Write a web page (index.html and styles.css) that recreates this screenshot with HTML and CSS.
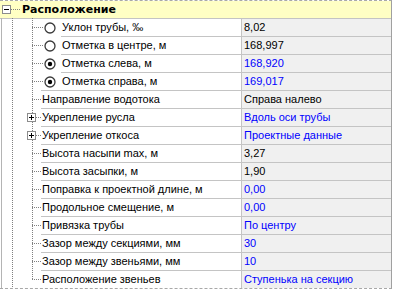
FILE: index.html
```html
<!DOCTYPE html>
<html lang="ru">
<head>
<meta charset="utf-8">
<title>Расположение</title>
<link rel="stylesheet" href="styles.css">
</head>
<body>

<div class="grid">
    <div class="cat">
        <span class="toggle"></span><span class="cat-line"></span><span class="cat-title">Расположение</span>
    </div>

    <div class="row first">
        <div class="name"><span class="trunk"></span><span class="branch wide"></span><span class="radio"><svg width="12" height="12" viewBox="0 0 12 12"><circle cx="6" cy="6" r="5" fill="#fff" stroke="#3a3a3a" stroke-width="1.3"/></svg></span><span class="text">Уклон трубы, ‰</span></div>
        <div class="value">8,02</div>
    </div>
    <div class="row">
        <div class="name"><span class="trunk"></span><span class="branch wide"></span><span class="radio"><svg width="12" height="12" viewBox="0 0 12 12"><circle cx="6" cy="6" r="5" fill="#fff" stroke="#3a3a3a" stroke-width="1.3"/></svg></span><span class="text">Отметка в центре, м</span></div>
        <div class="value">168,997</div>
    </div>
    <div class="row">
        <div class="name"><span class="trunk"></span><span class="branch wide"></span><span class="radio"><svg width="12" height="12" viewBox="0 0 12 12"><circle cx="6" cy="6" r="5" fill="#fff" stroke="#3a3a3a" stroke-width="1.3"/><circle cx="6" cy="6" r="2.2" fill="#000"/></svg></span><span class="text">Отметка слева, м</span></div>
        <div class="value blue">168,920</div>
    </div>
    <div class="row">
        <div class="name"><span class="trunk"></span><span class="branch wide"></span><span class="radio"><svg width="12" height="12" viewBox="0 0 12 12"><circle cx="6" cy="6" r="5" fill="#fff" stroke="#3a3a3a" stroke-width="1.3"/><circle cx="6" cy="6" r="2.2" fill="#000"/></svg></span><span class="text">Отметка справа, м</span></div>
        <div class="value blue">169,017</div>
    </div>
    <div class="row">
        <div class="name"><span class="trunk"></span><span class="branch"></span><span class="text">Направление водотока</span></div>
        <div class="value">Справа налево</div>
    </div>
    <div class="row">
        <div class="name"><span class="trunk"></span><span class="branch"><span class="toggle plus"></span></span><span class="text">Укрепление русла</span></div>
        <div class="value blue">Вдоль оси трубы</div>
    </div>
    <div class="row">
        <div class="name"><span class="trunk"></span><span class="branch"><span class="toggle plus"></span></span><span class="text">Укрепление откоса</span></div>
        <div class="value blue">Проектные данные</div>
    </div>
    <div class="row">
        <div class="name"><span class="trunk"></span><span class="branch"></span><span class="text">Высота насыпи max, м</span></div>
        <div class="value">3,27</div>
    </div>
    <div class="row">
        <div class="name"><span class="trunk"></span><span class="branch"></span><span class="text">Высота засыпки, м</span></div>
        <div class="value">1,90</div>
    </div>
    <div class="row">
        <div class="name"><span class="trunk"></span><span class="branch"></span><span class="text">Поправка к проектной длине, м</span></div>
        <div class="value blue">0,00</div>
    </div>
    <div class="row">
        <div class="name"><span class="trunk"></span><span class="branch"></span><span class="text">Продольное смещение, м</span></div>
        <div class="value blue">0,00</div>
    </div>
    <div class="row">
        <div class="name"><span class="trunk"></span><span class="branch"></span><span class="text">Привязка трубы</span></div>
        <div class="value blue">По центру</div>
    </div>
    <div class="row">
        <div class="name"><span class="trunk"></span><span class="branch"></span><span class="text">Зазор между секциями, мм</span></div>
        <div class="value blue">30</div>
    </div>
    <div class="row">
        <div class="name"><span class="trunk"></span><span class="branch"></span><span class="text">Зазор между звеньями, мм</span></div>
        <div class="value blue">10</div>
    </div>
    <div class="row last">
        <div class="name"><span class="trunk"></span><span class="branch"></span><span class="text">Расположение звеньев</span></div>
        <div class="value blue">Ступенька на секцию</div>
    </div>
</div>

</body>
</html>
```

FILE: styles.css
```css
body {
    margin: 0;
    background: #ffffff;
    color: #000000;
    font-family: "Liberation Sans", Arial, sans-serif;
    font-size: 11px;
}

.grid {
    width: 391px;
    border-top: 1px dashed #a8a8a8;
    border-bottom: 1px dashed #a8a8a8;
    border-right: 1px solid #a0a0a0;
}

/* category header */
.cat {
    display: flex;
    align-items: center;
    height: 17px;
    background: #ffffc4;
}

.cat .toggle {
    margin-left: 2px;
}

.cat-line {
    width: 10px;
    height: 1px;
    background: repeating-linear-gradient(to right, #808080 0 1px, transparent 1px 2px);
}

.cat-title {
    margin-left: 1px;
    font-family: "DejaVu Sans", sans-serif;
    font-weight: bold;
    font-size: 11px;
}

/* +/- boxes */
.toggle {
    flex: none;
    display: block;
    width: 7px;
    height: 7px;
    border: 1px solid #8c8c8c;
    background: linear-gradient(#000, #000) center / 5px 1px no-repeat, #ffffff;
}

.toggle.plus {
    background: linear-gradient(#000, #000) center / 1px 5px no-repeat,
                linear-gradient(#000, #000) center / 5px 1px no-repeat,
                #ffffff;
}

/* rows */
.row {
    display: grid;
    grid-template-columns: 241px 1fr;
    height: 18px;
}

.row.first {
    box-shadow: inset 0 1px #c4c4c4;
}

.name {
    display: flex;
    min-width: 0;
}

.trunk {
    flex: none;
    width: 32px;
    background: linear-gradient(#b4b4b4, #b4b4b4) 1px 0 / 1px 100% no-repeat,
                repeating-linear-gradient(to bottom, #808080 0 1px, transparent 1px 2px) 12px 0 / 1px 100% no-repeat;
}

.branch {
    flex: none;
    display: flex;
    align-items: center;
    width: 9px;
    background: repeating-linear-gradient(to bottom, #808080 0 1px, transparent 1px 2px) 0 0 / 1px 100% no-repeat,
                repeating-linear-gradient(to right, #808080 0 1px, transparent 1px 2px) 0 9px / 100% 1px no-repeat;
}

.branch.wide {
    width: 12px;
}

.row.last .branch {
    background: repeating-linear-gradient(to bottom, #808080 0 1px, transparent 1px 2px) 0 0 / 1px 10px no-repeat,
                repeating-linear-gradient(to right, #808080 0 1px, transparent 1px 2px) 0 9px / 100% 1px no-repeat;
}

.branch .toggle {
    margin-left: -5px;
    margin-top: 1px;
}

.radio {
    flex: none;
    display: flex;
    align-items: center;
    width: 17px;
    padding-top: 1px;
}

.radio svg {
    display: block;
}

.text {
    flex: 1;
    padding: 1px 0 0 1px;
    line-height: 17px;
    white-space: nowrap;
    background: linear-gradient(#c4c4c4, #c4c4c4) 0 0 / 100% 1px no-repeat;
}

.value {
    padding: 1px 0 0 2px;
    line-height: 17px;
    white-space: nowrap;
    border-left: 1px solid #c4c4c4;
    background: linear-gradient(#c4c4c4, #c4c4c4) 0 0 / 100% 1px no-repeat, #f0f0f0;
}

.blue {
    color: #0000ff;
}
```
